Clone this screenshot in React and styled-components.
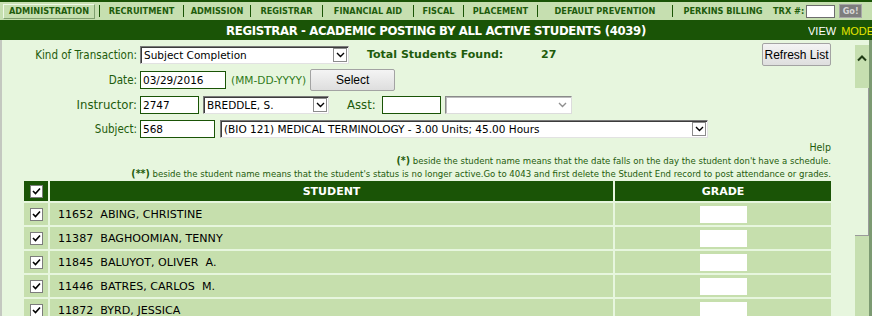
import React from "react";
import styled, { createGlobalStyle } from "styled-components";

const DARK = "#1a5406";
const NAV_BG = "#c6dfb0";
const BODY_BG = "#e7f6de";
const ROW_BG = "#c6dfad";
const LABEL = "#1e5c0c";

const TAHOMA = `"DejaVu Sans Condensed", "DejaVu Sans", sans-serif`;
const VERDANA = `"DejaVu Sans", sans-serif`;
const ARIAL = `"Liberation Sans", Arial, sans-serif`;

const GlobalStyle = createGlobalStyle`
  html, body {
    margin: 0;
    padding: 0;
  }
  body {
    width: 872px;
    height: 316px;
    overflow: hidden;
    background: ${BODY_BG};
  }
`;

const Page = styled.div`
  width: 872px;
  height: 316px;
  overflow: hidden;
  display: flex;
  flex-direction: column;
`;

const Nav = styled.div`
  height: 18px;
  border-top: 2px solid ${DARK};
  background: ${NAV_BG};
  display: flex;
  align-items: center;
  padding-left: 3px;
  font-family: ${TAHOMA};
  font-size: 9.1px;
  font-weight: bold;
  color: ${LABEL};
  white-space: nowrap;
  & > * {
    flex-shrink: 0;
  }
`;

// each tab owns the space between two separators, its label centred in it
const Tab = styled.span`
  display: flex;
  align-items: center;
  justify-content: center;
  width: ${(p) => p.$w}px;
  height: 15px;
  box-sizing: border-box;
  border: 1px solid transparent;
  ${(p) =>
    p.$active &&
    `
    border-color: #eef8e6 #7f9f6e #7f9f6e #eef8e6;
    margin-right: 4px;
  `}
`;

const TrxLabel = styled.span`
  margin-left: 0;
`;

const Sep = styled.span`
  width: 1px;
  height: 12px;
  background: ${DARK};
`;

const TrxInput = styled.span`
  display: inline-block;
  width: 29px;
  height: 13px;
  box-sizing: border-box;
  background: #fff;
  border: 1px solid #6d6d6d;
  margin-left: 2px;
`;

const GoButton = styled.span`
  display: inline-flex;
  align-items: center;
  justify-content: center;
  width: 23px;
  height: 14px;
  box-sizing: border-box;
  margin-left: 4px;
  background: #7d7d7d;
  border: 1px solid #a7a7a7;
  color: #d8d8d8;
  font-size: 9px;
`;

const TitleBar = styled.div`
  height: 20px;
  background: ${DARK};
  display: grid;
  grid-template-columns: 1fr auto 1fr;
  align-items: center;
  white-space: nowrap;
  overflow: hidden;
`;

const Title = styled.div`
  color: #fff;
  font-family: ${TAHOMA};
  font-weight: bold;
  font-size: 13px;
  letter-spacing: -0.35px;
`;

const ViewMode = styled.div`
  justify-self: end;
  width: 64px;
  overflow: hidden;
  font-family: ${ARIAL};
  font-size: 11px;
  color: #fff;
  padding-top: 2px;
  span {
    color: #e6e600;
    margin-left: 5px;
  }
`;

const Body = styled.div`
  flex: 1;
  display: flex;
  border-left: 2px solid #c4c8c0;
  min-height: 0;
`;

const Main = styled.div`
  flex: 1;
  padding: 2px 24px 0 22px;
  min-width: 0;
`;

const Form = styled.div`
  display: grid;
  grid-template-columns: 116px 1fr;
  grid-template-rows: 25px 25px 25px 24px;
  align-items: center;
`;

const Label = styled.div`
  text-align: right;
  padding-right: 3px;
  font-family: ${TAHOMA};
  font-size: ${(p) => (p.$big ? 13 : 11.5)}px;
  color: ${LABEL};
`;

const Line = styled.div`
  display: flex;
  align-items: center;
`;

const TextInput = styled.div`
  width: ${(p) => p.$w}px;
  height: 18px;
  box-sizing: border-box;
  border: 1px solid ${DARK};
  background: #fff;
  font-family: ${VERDANA};
  font-size: 10.5px;
  line-height: 16px;
  padding-left: 2px;
  margin-left: ${(p) => p.$ml || 0}px;
  color: #000;
`;

const SelectBox = styled.div`
  width: ${(p) => p.$w}px;
  height: 18px;
  box-sizing: border-box;
  margin-left: ${(p) => p.$ml || 0}px;
  display: flex;
  align-items: stretch;
  background: #fff;
  border-style: solid;
  border-width: 1px;
  border-color: ${(p) =>
    p.$disabled ? "#8a8a8a #dcdcdc #dcdcdc #8a8a8a" : "#7a7a7a #e2e2e2 #e2e2e2 #7a7a7a"};
  box-shadow: inset 1px 1px 0 ${(p) => (p.$disabled ? "#bdbdbd" : "#3c3c3c")};
  font-family: ${VERDANA};
  font-size: 10.5px;
  color: #000;
`;

const SelectText = styled.span`
  flex: 1;
  padding-left: 3px;
  line-height: 16px;
  white-space: nowrap;
  overflow: hidden;
`;

const Arrow = styled.span`
  width: 14px;
  display: flex;
  align-items: center;
  justify-content: center;
  margin: 1px 1px 1px 0;
  box-sizing: border-box;
  border: ${(p) => (p.$plain ? "none" : "1px solid #8c8c8c")};
  background: #fff;
`;

const Chevron = ({ color = "#000" }) => (
  <svg width="9" height="6" viewBox="0 0 9 6">
    <path d="M1 1 L4.5 4.5 L8 1" fill="none" stroke={color} strokeWidth="1.4" />
  </svg>
);

const Select = ({ w, ml, text, disabled }) => (
  <SelectBox $w={w} $ml={ml} $disabled={disabled}>
    <SelectText>{text}</SelectText>
    <Arrow $plain={disabled}>
      <Chevron color={disabled ? "#8f8f8f" : "#000"} />
    </Arrow>
  </SelectBox>
);

const Button = styled.div`
  width: ${(p) => p.$w}px;
  height: ${(p) => p.$h || 22}px;
  box-sizing: border-box;
  margin-left: ${(p) => p.$ml || 0}px;
  display: flex;
  align-items: center;
  justify-content: center;
  border: 1px solid #a3a3a3;
  border-radius: 2px;
  background: linear-gradient(#f4f4f4, #dedede);
  font-family: ${ARIAL};
  font-size: 12px;
  color: #000;
`;

const Strong = styled.span`
  font-family: ${VERDANA};
  font-weight: bold;
  font-size: 11px;
  color: ${LABEL};
  margin-left: ${(p) => p.$ml || 0}px;
  width: ${(p) => (p.$w ? `${p.$w}px` : "auto")};
`;

const Hint = styled.span`
  font-family: ${VERDANA};
  font-size: 10.6px;
  color: #2f7a1a;
  margin-left: 5px;
`;

const Notes = styled.div`
  text-align: right;
  font-family: ${TAHOMA};
  font-size: 9.5px;
  line-height: 13px;
  color: ${LABEL};
  b {
    font-size: 10.5px;
  }
`;

const HelpLink = styled.div`
  font-size: 10.5px;
`;

const Table = styled.div`
  margin-top: 1px;
  display: grid;
  grid-template-columns: 24px 1fr 216px;
  grid-auto-rows: 22px;
  grid-template-rows: 20px;
  gap: 2px;
`;

const Head = styled.div`
  background: ${DARK};
  color: #fff;
  font-family: ${VERDANA};
  font-weight: bold;
  font-size: 11px;
  display: flex;
  align-items: center;
  justify-content: center;
`;

const Cell = styled.div`
  background: ${ROW_BG};
  display: flex;
  align-items: center;
  justify-content: ${(p) => p.$align || "flex-start"};
  font-family: ${VERDANA};
  font-size: 11.1px;
  color: #000;
  white-space: pre;
  padding-left: ${(p) => p.$pl || 0}px;
`;

const Check = styled.span`
  width: 13px;
  height: 13px;
  box-sizing: border-box;
  border: 1px solid #7c7c7c;
  background: #fff;
  display: flex;
  align-items: center;
  justify-content: center;
`;

const CheckMark = () => (
  <Check>
    <svg width="9" height="9" viewBox="0 0 9 9">
      <path d="M1 4 L3.5 6.5 L8 1.5" fill="none" stroke="#000" strokeWidth="1.6" />
    </svg>
  </Check>
);

const GradeBox = styled.span`
  width: 47px;
  height: 17px;
  background: #fff;
`;

const Scrollbar = styled.div`
  width: 14px;
  border-right: 3px solid #7c9a72;
  display: flex;
  flex-direction: column;
  padding-top: 5px;
  background: ${BODY_BG};
`;

const ScrollUp = styled.div`
  height: 43px;
  background: ${NAV_BG};
  display: flex;
  justify-content: center;
  padding-top: 10px;
  box-sizing: border-box;
`;

const Track = styled.div`
  height: 147px;
  border-right: 1px solid #9a9a9a;
`;

const Thumb = styled.div`
  flex: 1;
  background: ${NAV_BG};
  border-top: 1px solid #9a9a9a;
`;

const tabs = [
  { label: "ADMINISTRATION", w: 92, active: true },
  { label: "RECRUITMENT", w: 83 },
  { label: "ADMISSION", w: 66 },
  { label: "REGISTRAR", w: 71 },
  { label: "FINANCIAL AID", w: 90 },
  { label: "FISCAL", w: 49 },
  { label: "PLACEMENT", w: 73 },
  { label: "DEFAULT PREVENTION", w: 134 },
  { label: "PERKINS BILLING", w: 100 },
];

const students = [
  "11652  ABING, CHRISTINE",
  "11387  BAGHOOMIAN, TENNY",
  "11845  BALUYOT, OLIVER  A.",
  "11446  BATRES, CARLOS  M.",
  "11872  BYRD, JESSICA",
  "11903  CASTILLO, MARIA",
];

export default function App() {
  return (
    <Page>
      <GlobalStyle />
      <Nav>
        {tabs.map((t, i) => (
          <React.Fragment key={t.label}>
            {i > 0 && <Sep />}
            <Tab $active={t.active} $w={t.w}>
              {t.label}
            </Tab>
          </React.Fragment>
        ))}
        <TrxLabel>TRX #:</TrxLabel>
        <TrxInput />
        <GoButton>Go!</GoButton>
      </Nav>
      <TitleBar>
        <div />
        <Title>REGISTRAR - ACADEMIC POSTING BY ALL ACTIVE STUDENTS (4039)</Title>
        <ViewMode>
          VIEW<span>MODE</span>
        </ViewMode>
      </TitleBar>
      <Body>
        <Main>
          <Form>
            <Label>Kind of Transaction:</Label>
            <Line>
              <Select w={209} text="Subject Completion" />
              <Strong $ml={18} $w={174}>
                Total Students Found:
              </Strong>
              <Strong>27</Strong>
              <Button $w={69} $h={23} style={{ marginLeft: "auto" }}>
                Refresh List
              </Button>
            </Line>

            <Label>Date:</Label>
            <Line>
              <TextInput $w={86}>03/29/2016</TextInput>
              <Hint>(MM-DD-YYYY)</Hint>
              <Button $w={85} $ml={4}>
                Select
              </Button>
            </Line>

            <Label $big>Instructor:</Label>
            <Line>
              <TextInput $w={59}>2747</TextInput>
              <Select w={126} ml={4} text="BREDDLE, S." />
              <Label $big style={{ marginLeft: 18, paddingRight: 0 }}>
                Asst:
              </Label>
              <TextInput $w={59} $ml={6} />
              <Select w={127} ml={4} text="" disabled />
            </Line>

            <Label>Subject:</Label>
            <Line>
              <TextInput $w={75}>568</TextInput>
              <Select
                w={488}
                ml={5}
                text="(BIO 121) MEDICAL TERMINOLOGY - 3.00 Units; 45.00 Hours"
              />
            </Line>
          </Form>

          <Notes>
            <HelpLink>Help</HelpLink>
            <div>
              <b>(*)</b> beside the student name means that the date falls on the day the
              student don't have a schedule.
            </div>
            <div>
              <b>(**)</b> beside the student name means that the student's status is no longer
              active.Go to 4043 and first delete the Student End record to post attendance or
              grades.
            </div>
          </Notes>

          <Table>
            <Head>
              <CheckMark />
            </Head>
            <Head>STUDENT</Head>
            <Head>GRADE</Head>
            {students.map((s) => (
              <React.Fragment key={s}>
                <Cell $align="center">
                  <CheckMark />
                </Cell>
                <Cell $pl={8}>{s}</Cell>
                <Cell $align="center">
                  <GradeBox />
                </Cell>
              </React.Fragment>
            ))}
          </Table>
        </Main>
        <Scrollbar>
          <ScrollUp>
            <svg width="10" height="7" viewBox="0 0 10 7">
              <path d="M1 5.5 L5 1.5 L9 5.5" fill="none" stroke="#1f3a14" strokeWidth="2" />
            </svg>
          </ScrollUp>
          <Track />
          <Thumb />
        </Scrollbar>
      </Body>
    </Page>
  );
}
